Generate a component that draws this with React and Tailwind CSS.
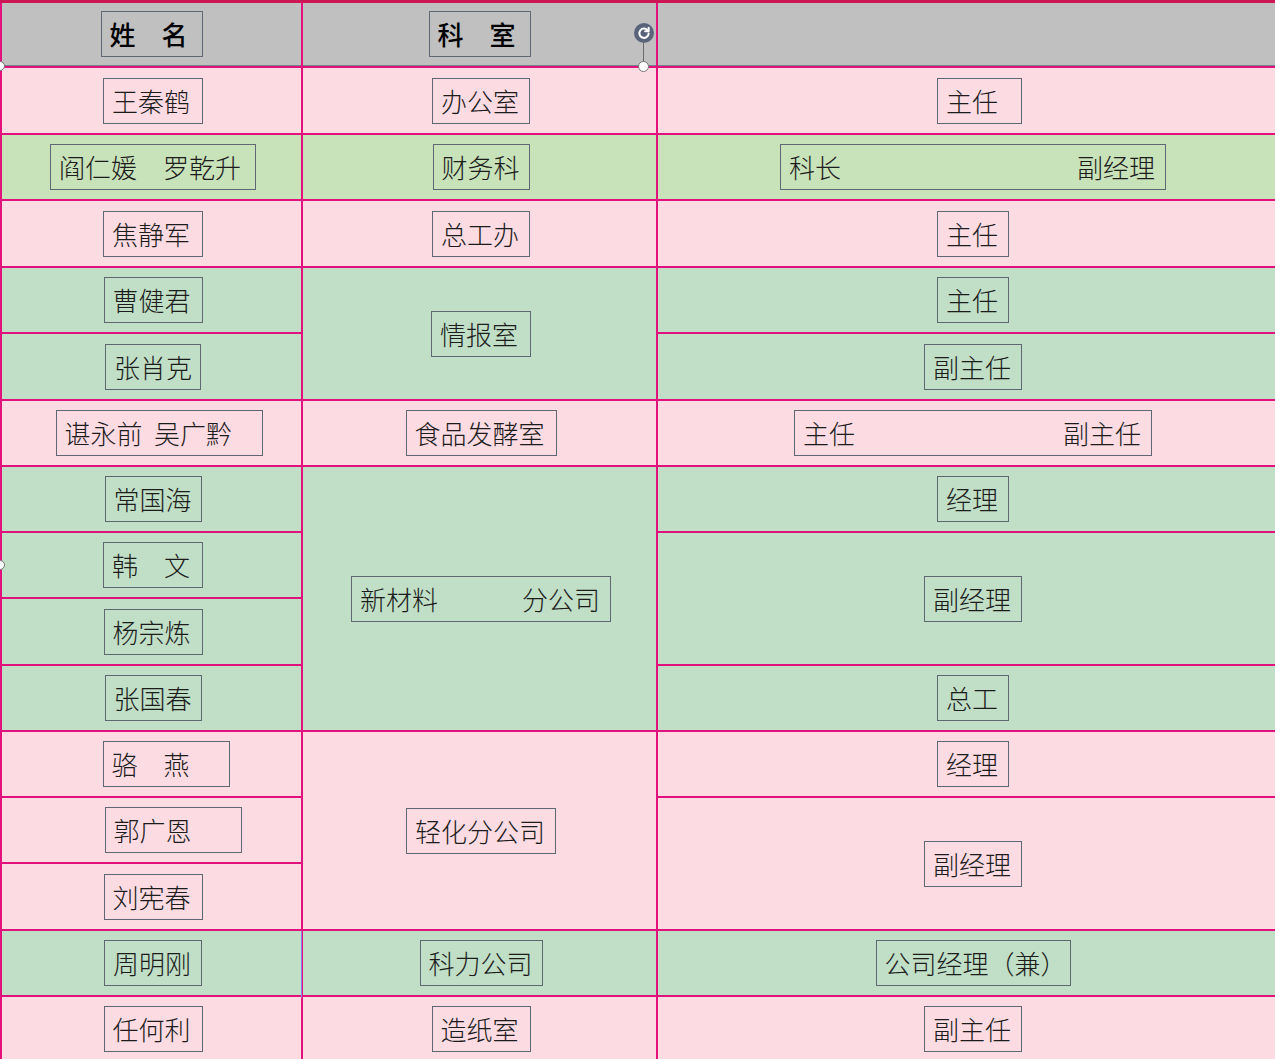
const PINK = 'bg-[#fddbe3]';
const LIME = 'bg-[#c8e2b9]';
const GREEN = 'bg-[#c0dfc6]';

// col, row (1-based in data rows), span, bg, box width, content, shift (ml)
const cells = [
  { c: 1, r: 1, bg: PINK, w: 100, t: '王秦鹤' },
  { c: 2, r: 1, bg: PINK, w: 98, t: '办公室' },
  { c: 3, r: 1, bg: PINK, w: 85, t: '主任', ml: 'ml-[13px]' },

  { c: 1, r: 2, bg: LIME, w: 206, t: '阎仁媛　罗乾升' },
  { c: 2, r: 2, bg: LIME, w: 97, t: '财务科' },
  { c: 3, r: 2, bg: LIME, w: 386, parts: ['科长', '副经理'] },

  { c: 1, r: 3, bg: PINK, w: 100, t: '焦静军' },
  { c: 2, r: 3, bg: PINK, w: 98, t: '总工办' },
  { c: 3, r: 3, bg: PINK, w: 72, t: '主任' },

  { c: 1, r: 4, bg: GREEN, w: 99, t: '曹健君' },
  { c: 2, r: 4, span: 2, bg: GREEN, w: 100, t: '情报室' },
  { c: 3, r: 4, bg: GREEN, w: 72, t: '主任' },
  { c: 1, r: 5, bg: GREEN, w: 96, t: '张肖克' },
  { c: 3, r: 5, bg: GREEN, w: 98, t: '副主任' },

  { c: 1, r: 6, bg: PINK, w: 207, t: '谌永前  吴广黔', ml: 'ml-[12px]' },
  { c: 2, r: 6, bg: PINK, w: 151, t: '食品发酵室' },
  { c: 3, r: 6, bg: PINK, w: 358, parts: ['主任', '副主任'] },

  { c: 1, r: 7, bg: GREEN, w: 97, t: '常国海' },
  { c: 2, r: 7, span: 4, bg: GREEN, w: 260, parts: ['新材料', '分公司'] },
  { c: 3, r: 7, bg: GREEN, w: 72, t: '经理' },
  { c: 1, r: 8, bg: GREEN, w: 100, t: '韩　文' },
  { c: 3, r: 8, span: 2, bg: GREEN, w: 98, t: '副经理' },
  { c: 1, r: 9, bg: GREEN, w: 99, t: '杨宗炼' },
  { c: 1, r: 10, bg: GREEN, w: 97, t: '张国春' },
  { c: 3, r: 10, bg: GREEN, w: 72, t: '总工' },

  { c: 1, r: 11, bg: PINK, w: 127, t: '骆　燕', ml: 'ml-[26px]' },
  { c: 2, r: 11, span: 3, bg: PINK, w: 150, t: '轻化分公司' },
  { c: 3, r: 11, bg: PINK, w: 72, t: '经理' },
  { c: 1, r: 12, bg: PINK, w: 137, t: '郭广恩', ml: 'ml-[40px]' },
  { c: 3, r: 12, span: 2, bg: PINK, w: 98, t: '副经理' },
  { c: 1, r: 13, bg: PINK, w: 99, t: '刘宪春' },

  { c: 1, r: 14, bg: GREEN, w: 98, t: '周明刚' },
  { c: 2, r: 14, bg: GREEN, w: 123, t: '科力公司' },
  { c: 3, r: 14, bg: GREEN, w: 195, t: '公司经理（兼）' },

  { c: 1, r: 15, bg: PINK, w: 99, t: '任何利' },
  { c: 2, r: 15, bg: PINK, w: 99, t: '造纸室' },
  { c: 3, r: 15, bg: PINK, w: 98, t: '副主任' },
];

function Box({ w, t, parts, ml, bold }) {
  return (
    <div
      className={`h-[46px] border border-[#5f6773] flex items-center pl-[8px] pr-[10px] text-[26px] leading-none text-[#1c1c1c] whitespace-pre ${
        parts ? 'justify-between' : ''
      } ${bold ? 'font-medium text-black' : 'font-light'} ${ml || ''}`}
      style={{ width: w }}
    >
      {parts ? (
        <>
          <span>{parts[0]}</span>
          <span>{parts[1]}</span>
        </>
      ) : (
        t
      )}
    </div>
  );
}

export default function App() {
  return (
    <div
      className="relative w-[1275px] h-[1059px] overflow-hidden bg-[#e2127c] border-t-[3px] border-[#cc1656] pl-[2px]"
      style={{ fontFamily: '"Noto Sans CJK SC", "Noto Sans", sans-serif' }}
    >
      <div className="grid gap-[2px] grid-cols-[299px_353px_617px] grid-rows-[63px_65px_64px_65px_64px_65px_64px_64px_64px_65px_64px_64px_64px_65px_64px_64px]">
        {/* header */}
        <div className="bg-[#c0c0c0] border-b border-[#74808f] flex items-center justify-center">
          <Box w={102} t="姓　名" bold />
        </div>
        <div className="bg-[#c0c0c0] border-b border-[#74808f] flex items-center justify-center">
          <Box w={102} t="科　室" bold />
        </div>
        <div className="bg-[#c0c0c0] border-b border-[#74808f]" />

        {cells.map((cell, i) => (
          <div
            key={i}
            className={`${cell.bg} flex items-center justify-center ${cell.c === 3 ? 'pl-[13px]' : 'pl-[3px]'}`}
            style={{
              gridColumn: cell.c,
              gridRow: `${cell.r + 1} / span ${cell.span || 1}`,
            }}
          >
            <Box {...cell} />
          </div>
        ))}
      </div>

      {/* selection handles */}
      <div className="absolute left-[634px] top-[20px] w-[20px] h-[20px] rounded-full bg-[#59637a] flex items-center justify-center">
        <svg width="14" height="14" viewBox="0 0 24 24" fill="none" stroke="white" strokeWidth="3.5" strokeLinecap="round">
          <path d="M19 8.5A8 8 0 1 0 20 13" />
          <path d="M20 3v6h-6" strokeLinejoin="round" />
        </svg>
      </div>
      <div className="absolute left-[643px] top-[38px] w-[1px] h-[22px] bg-[#6b6b6b]" />
      <div className="absolute left-[638px] top-[58px] w-[11px] h-[11px] rounded-full bg-white border border-[#777]" />
      <div className="absolute left-[-5px] top-[58px] w-[10px] h-[10px] rounded-full bg-white border border-[#777]" />
      <div className="absolute left-[-5px] top-[557px] w-[10px] h-[10px] rounded-full bg-white border border-[#777]" />
      <div className="absolute left-[301px] top-[928px] w-[1px] h-[67px] bg-[#8a7de8]" />
    </div>
  );
}
